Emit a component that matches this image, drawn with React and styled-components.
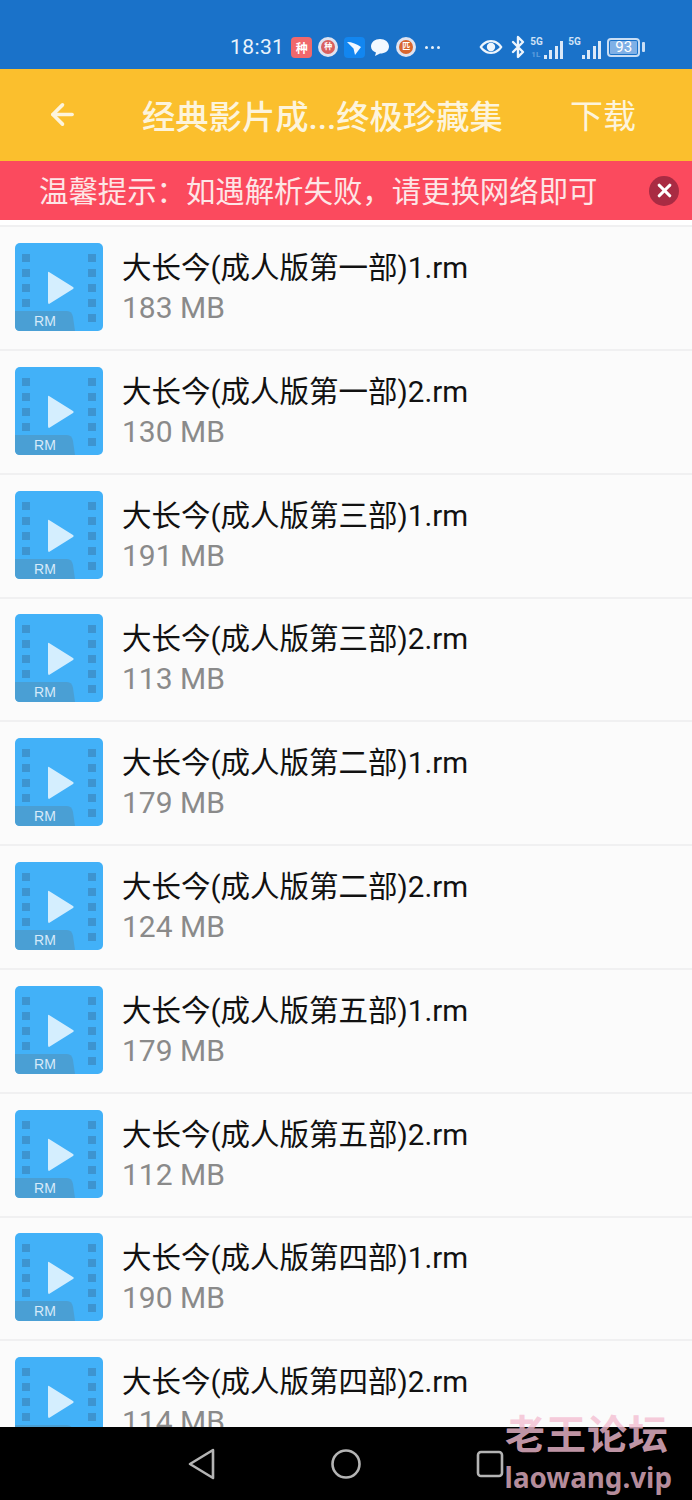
import styled, { createGlobalStyle } from "styled-components"
import { ArrowLeft, X, Bluetooth } from "lucide-react"

const GlobalStyle = createGlobalStyle`
    html, body {
        margin: 0;
        padding: 0;
        background: #fdfdfd;
    }
    * {
        box-sizing: border-box;
    }
`
const Page = styled.div`
    width: 692px;
    height: 1500px;
    display: flex;
    flex-direction: column;
    position: relative;
    overflow: hidden;
    font-family: Roboto, "Noto Sans CJK SC", sans-serif;
`
const StatusBar = styled.div`
    height: 69px;
    flex-shrink: 0;
    background: #1a72c9;
    display: flex;
    align-items: center;
    padding: 25px 0 0 230px;
    color: #e8f2fb;
`
const Clock = styled.span`
    font-size: 21px;
    letter-spacing: 0.4px;
    margin-right: 7px;
`
const AppTile = styled.span`
    width: 21px;
    height: 21px;
    border-radius: 4px;
    background: #f0686c;
    color: #fff;
    font-size: 12px;
    font-weight: 700;
    display: flex;
    align-items: center;
    justify-content: center;
    margin-right: 6px;
`
const AppRound = styled.span`
    width: 20px;
    height: 20px;
    border-radius: 50%;
    background: #dfe3f0;
    display: flex;
    align-items: center;
    justify-content: center;
    margin-right: ${(p) => p.$gap}px;
`
const AppRoundInner = styled.span`
    width: 14px;
    height: 14px;
    border-radius: 50%;
    background: ${(p) => p.$color};
    color: #fff;
    font-size: 8px;
    font-weight: 700;
    line-height: 14px;
    text-align: center;
`
const StatusSvg = styled.svg`
    display: block;
    flex-shrink: 0;
    margin-right: ${(p) => p.$gap || 0}px;
`
const Dots = styled.span`
    display: flex;
    gap: 3px;
    margin-left: 3px;
    margin-right: 39px;
`
const Dot = styled.span`
    width: 3px;
    height: 3px;
    border-radius: 50%;
    background: #e8f2fb;
`
const Signal = styled.span`
    position: relative;
    width: 33px;
    height: 23px;
    display: flex;
    align-items: flex-end;
    justify-content: flex-end;
    gap: 2.5px;
    margin-right: ${(p) => p.$gap}px;
`
const SignalBar = styled.span`
    width: 3px;
    height: ${(p) => p.$h}px;
    background: #dbe9f8;
`
const SignalTag = styled.span`
    position: absolute;
    left: 0;
    top: 0;
    font-size: 10px;
    line-height: 11px;
    font-weight: 700;
    color: #cfe2f6;
`
const SignalSub = styled.span`
    position: absolute;
    left: 1px;
    bottom: 0;
    font-size: 8px;
    line-height: 9px;
    font-weight: 700;
    color: #5f9fde;
`
const Battery = styled.span`
    width: 33px;
    height: 19px;
    margin-left: 1px;
    border: 2px solid #c9def5;
    border-radius: 4px;
    padding: 1px;
    display: flex;
`
const BatteryFill = styled.span`
    flex: 1;
    background: #7fb0e6;
    border-radius: 1px;
    color: #fff;
    font-size: 15px;
    line-height: 13px;
    text-align: center;
`
const BatteryCap = styled.span`
    width: 3px;
    height: 10px;
    margin-left: 2px;
    border-radius: 1px;
    background: #c9def5;
`
const Header = styled.div`
    height: 92px;
    flex-shrink: 0;
    background: #fbbf2d;
    color: #fdf4dc;
    display: flex;
    align-items: center;
    padding: 0 56px 2px 46px;
    font-size: 33px;
`
const BackButton = styled.span`
    display: flex;
    margin-right: 63px;
`
const Title = styled.span`
    flex: 1;
    font-weight: 500;
    font-size: 33.3px;
`
const Banner = styled.div`
    height: 59px;
    flex-shrink: 0;
    background: #fb4a5e;
    color: #fde6e6;
    display: flex;
    align-items: center;
    justify-content: space-between;
    padding: 0 13px 0 39px;
    font-size: 29.4px;
`
const BannerText = styled.span`
    margin-top: -4px;
`
const CloseButton = styled.span`
    width: 30px;
    height: 30px;
    border-radius: 50%;
    background: #a92b43;
    color: #fff;
    display: flex;
    align-items: center;
    justify-content: center;
`
const List = styled.div`
    flex: 1;
    min-height: 0;
    overflow: hidden;
    padding-top: 5.2px;
    background: #fff;
`
const Row = styled.div`
    height: 123.8px;
    border-top: 2px solid #f0f0f1;
    background: #fbfbfb;
    display: flex;
    align-items: center;
    gap: 19px;
    padding: 0 0 2px 15px;
    flex-shrink: 0;
`
const FileIcon = styled.svg`
    width: 88px;
    height: 88px;
    flex-shrink: 0;
    display: block;
`
const Info = styled.div`
    display: flex;
    flex-direction: column;
    gap: 2px;
    margin-top: 2px;
`
const Name = styled.div`
    font-size: 29.5px;
    line-height: 38px;
    color: #111;
`
const Size = styled.div`
    font-size: 30px;
    line-height: 38px;
    color: #8a8a8a;
`
const NavBar = styled.div`
    height: 73px;
    flex-shrink: 0;
    background: #000;
    display: flex;
    align-items: center;
    padding-left: 188px;
    gap: 115px;
`
const NavSvg = styled.svg`
    display: block;
`
const Watermark = styled.div`
    position: absolute;
    right: 20px;
    bottom: 5px;
    display: flex;
    flex-direction: column;
    align-items: flex-end;
    color: rgba(244, 190, 210, 0.8);
    font-weight: 700;
    pointer-events: none;
`
const MarkTitle = styled.div`
    font-size: 40px;
    line-height: 46px;
    letter-spacing: 1px;
    margin-right: 3px;
`
const MarkSite = styled.div`
    font-family: "Noto Sans", sans-serif;
    font-size: 27.8px;
    line-height: 36px;
    color: #b58c9b;
`

const bannerText = "温馨提示\uFF1A如遇解析失败\uFF0C请更换网络即可"

const files = [
    { name: "大长今(成人版第一部)1.rm", size: "183 MB" },
    { name: "大长今(成人版第一部)2.rm", size: "130 MB" },
    { name: "大长今(成人版第三部)1.rm", size: "191 MB" },
    { name: "大长今(成人版第三部)2.rm", size: "113 MB" },
    { name: "大长今(成人版第二部)1.rm", size: "179 MB" },
    { name: "大长今(成人版第二部)2.rm", size: "124 MB" },
    { name: "大长今(成人版第五部)1.rm", size: "179 MB" },
    { name: "大长今(成人版第五部)2.rm", size: "112 MB" },
    { name: "大长今(成人版第四部)1.rm", size: "190 MB" },
    { name: "大长今(成人版第四部)2.rm", size: "114 MB" },
]

const VideoIcon = () => {
    const holes = [7, 22, 37, 52]
    return (
        <FileIcon viewBox="0 0 88 88">
            <rect width="88" height="88" rx="5" fill="#42b1f8" />
            {holes.map((y) => (
                <rect key={y} x="7" y={y + 4} width="8" height="8" fill="#3d94d0" />
            ))}
            {[...holes, 67].map((y) => (
                <rect key={y} x="73" y={y + 4} width="8" height="8" fill="#3d94d0" />
            ))}
            <path d="M34 29 L58 44 Q59.500 45 58 46 L34 61 Q33 61 33 59 V30 Q33 28 34 29 Z" fill="#d4eefe" />
            <path d="M0 68 H52 Q57 68 58 74 L60 88 H5 Q0 88 0 83 Z" fill="#4a9fd4" />
            <text x="30" y="83" textAnchor="middle" fontFamily="Liberation Sans, sans-serif" fontSize="14" fill="#d6eafa">RM</text>
        </FileIcon>
    )
}

const App = () => {
    return (
        <Page>
            <GlobalStyle />
            <StatusBar>
                <Clock>18:31</Clock>
                <AppTile>种</AppTile>
                <AppRound $gap={6}><AppRoundInner $color="#d9605f">种</AppRoundInner></AppRound>
                <StatusSvg width="21" height="21" viewBox="0 0 21 21" $gap={5}>
                    <rect width="21" height="21" rx="4" fill="#1286f0" />
                    <path d="M3 5 C8 5 13 7 17 10 L11 18 L9.500 11.500 Z" fill="#f2f8ff" />
                </StatusSvg>
                <StatusSvg width="20" height="20" viewBox="0 0 20 20" $gap={6}>
                    <path d="M10 2 C15 2 19 5 19 9.500 C19 14 15 16.500 10 16.500 L5 19 L6 15.500 C3 14.500 1 12.500 1 9.500 C1 5 5 2 10 2 Z" fill="#f2f8ff" />
                </StatusSvg>
                <AppRound $gap={6}><AppRoundInner $color="#d8662f">匹</AppRoundInner></AppRound>
                <Dots><Dot /><Dot /><Dot /></Dots>
                <StatusSvg width="24" height="16" viewBox="0 0 24 16" $gap={3}>
                    <path fillRule="evenodd" d="M12 1 C6.500 1 2.500 4.500 0.500 8 C2.500 11.500 6.500 15 12 15 C17.500 15 21.500 11.500 23.500 8 C21.500 4.500 17.500 1 12 1 Z M12 3.200 C15.500 3.200 19 5.500 20.800 8 C19 10.500 15.500 12.800 12 12.800 C8.500 12.800 5 10.500 3.200 8 C5 5.500 8.500 3.200 12 3.200 Z" fill="#eef5fc" />
                    <circle cx="12" cy="8" r="4.200" fill="#eef5fc" />
                </StatusSvg>
                <Bluetooth size={24} strokeWidth={2.4} color="#eef5fc" />
                <Signal $gap={5}>
                    <SignalTag>5G</SignalTag>
                    <SignalSub>1L</SignalSub>
                    <SignalBar $h={4} /><SignalBar $h={9} /><SignalBar $h={13} /><SignalBar $h={18} />
                </Signal>
                <Signal $gap={5}>
                    <SignalTag>5G</SignalTag>
                    <SignalBar $h={4} /><SignalBar $h={9} /><SignalBar $h={13} /><SignalBar $h={18} />
                </Signal>
                <Battery><BatteryFill>93</BatteryFill></Battery>
                <BatteryCap />
            </StatusBar>
            <Header>
                <BackButton><ArrowLeft size={33} strokeWidth={2.6} /></BackButton>
                <Title>经典影片成...终极珍藏集</Title>
                <span>下载</span>
            </Header>
            <Banner>
                <BannerText>{bannerText}</BannerText>
                <CloseButton><X size={21} strokeWidth={3.6} /></CloseButton>
            </Banner>
            <List>
                {files.map((file) => (
                    <Row key={file.name}>
                        <VideoIcon />
                        <Info>
                            <Name>{file.name}</Name>
                            <Size>{file.size}</Size>
                        </Info>
                    </Row>
                ))}
            </List>
            <NavBar>
                <NavSvg width="28" height="32" viewBox="0 0 28 32">
                    <path d="M25 2 L2 16 L25 30 Z" fill="none" stroke="#b4b4b4" strokeWidth="2.600" strokeLinejoin="round" />
                </NavSvg>
                <NavSvg width="30" height="30" viewBox="0 0 30 30">
                    <circle cx="15" cy="15" r="13.500" fill="none" stroke="#b4b4b4" strokeWidth="2.600" />
                </NavSvg>
                <NavSvg width="28" height="28" viewBox="0 0 28 28">
                    <rect x="2" y="2" width="24" height="24" rx="3" fill="none" stroke="#b4b4b4" strokeWidth="2.600" />
                </NavSvg>
            </NavBar>
            <Watermark>
                <MarkTitle>老王论坛</MarkTitle>
                <MarkSite>laowang.vip</MarkSite>
            </Watermark>
        </Page>
    )
}

export default App
